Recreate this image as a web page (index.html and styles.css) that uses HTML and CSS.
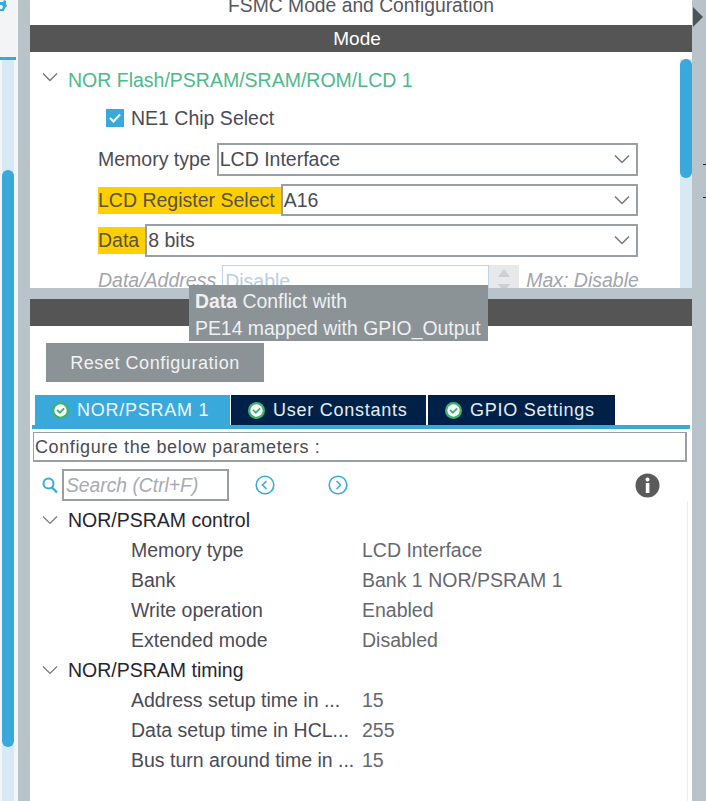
FILE: index.html
```html
<!DOCTYPE html>
<html lang="en">
<head>
<meta charset="utf-8">
<title>FSMC Mode and Configuration</title>
<link rel="stylesheet" href="styles.css">
</head>
<body>
<div class="app">
  <aside class="left">
    <svg class="gear" width="8" height="14" viewBox="0 0 8 14"><path d="M0 2h3l1-2 2 1v3l1 2-2 2-1 3H0V9h2l1-2-1-2H0z" fill="#39a9dc"/></svg>
    <div class="left-line"></div>
    <div class="left-track"><div class="left-thumb"></div></div>
  </aside>
  <div class="strip">
  </div>
  <main class="center">
    <section class="top">
      <div class="title">FSMC Mode and Configuration</div>
      <div class="bar bar-mode">Mode</div>
      <div class="mode-body">
        <div class="mode-content">
          <div class="group-row">
            <svg class="chev chev-up" width="16" height="10" viewBox="0 0 16 10"><path d="M1 1.5l7 7 7-7" fill="none" stroke="#777" stroke-width="1.4"/></svg>
            <span class="green">NOR Flash/PSRAM/SRAM/ROM/LCD 1</span>
          </div>
          <label class="check-row">
            <span class="check"><svg width="18" height="18" viewBox="0 0 18 18"><path d="M4 9l3.5 3.5L14 5.5" fill="none" stroke="#fff" stroke-width="2"/></svg></span>
            NE1 Chip Select
          </label>
          <div class="field">
            <span class="lab">Memory type</span>
            <div class="select">LCD Interface<svg class="sel-chev" width="18" height="10" viewBox="0 0 18 10"><path d="M2 1.5l7 7 7-7" fill="none" stroke="#777" stroke-width="1.5"/></svg></div>
          </div>
          <div class="field">
            <span class="lab warn">LCD Register Select</span>
            <div class="select">A16<svg class="sel-chev" width="18" height="10" viewBox="0 0 18 10"><path d="M2 1.5l7 7 7-7" fill="none" stroke="#777" stroke-width="1.5"/></svg></div>
          </div>
          <div class="field">
            <span class="lab warn">Data</span>
            <div class="select">8 bits<svg class="sel-chev" width="18" height="10" viewBox="0 0 18 10"><path d="M2 1.5l7 7 7-7" fill="none" stroke="#777" stroke-width="1.5"/></svg></div>
          </div>
          <div class="field disabled">
            <span class="lab">Data/Address</span>
            <div class="spin-input">Disable</div>
            <div class="spin"><svg width="30" height="30" viewBox="0 0 30 30"><path d="M15 4l6 8H9zM15 27l-6-8h12z" fill="#ccd0d3"/></svg></div>
            <span class="max">Max: Disable</span>
          </div>
        </div>
        <div class="v-track"><div class="v-thumb"></div></div>
      </div>
    </section>
    <div class="splitter"></div>
    <section class="bottom">
      <div class="bar bar-blank"></div>
      <button class="reset">Reset Configuration</button>
      <div class="tabs">
        <div class="tab active"><svg class="ok" width="17" height="17" viewBox="0 0 16 16"><circle cx="8" cy="8" r="8" fill="#3cb371"/><circle cx="8" cy="8" r="5.8" fill="#fff"/><path d="M4.8 7.4l2.6 2.6 4-4" fill="none" stroke="#3cb371" stroke-width="1.8"/></svg>NOR/PSRAM 1</div>
        <div class="tab"><svg class="ok" width="17" height="17" viewBox="0 0 16 16"><circle cx="8" cy="8" r="8" fill="#3cb371"/><circle cx="8" cy="8" r="5.8" fill="#fff"/><path d="M4.8 7.4l2.6 2.6 4-4" fill="none" stroke="#3cb371" stroke-width="1.8"/></svg>User Constants</div>
        <div class="tab tab-last"><svg class="ok" width="17" height="17" viewBox="0 0 16 16"><circle cx="8" cy="8" r="8" fill="#3cb371"/><circle cx="8" cy="8" r="5.8" fill="#fff"/><path d="M4.8 7.4l2.6 2.6 4-4" fill="none" stroke="#3cb371" stroke-width="1.8"/></svg>GPIO Settings</div>
      </div>
      <div class="tab-line"></div>
      <div class="config-box">Configure the below parameters :</div>
      <div class="search-row">
        <svg class="mag" width="18" height="18" viewBox="0 0 17 18"><circle cx="7" cy="7.5" r="5" fill="none" stroke="#39a9dc" stroke-width="2"/><path d="M10.5 11.5l5 5" stroke="#39a9dc" stroke-width="2.4"/></svg>
        <div class="search">Search (Ctrl+F)</div>
        <svg class="nav nav-prev" width="20" height="20" viewBox="0 0 20 20"><circle cx="10" cy="10" r="8.8" fill="none" stroke="#39a9dc" stroke-width="1.6"/><path d="M11.5 6l-4 4 4 4" fill="none" stroke="#39a9dc" stroke-width="1.6"/></svg>
        <svg class="nav nav-next" width="20" height="20" viewBox="0 0 20 20"><circle cx="10" cy="10" r="8.8" fill="none" stroke="#39a9dc" stroke-width="1.6"/><path d="M8.5 6l4 4-4 4" fill="none" stroke="#39a9dc" stroke-width="1.6"/></svg>
        <svg class="info" width="25" height="25" viewBox="0 0 25 25"><circle cx="12.5" cy="12.5" r="12" fill="#5a5a5a"/><circle cx="12.5" cy="6.5" r="2" fill="#fff"/><rect x="10.8" y="10" width="3.6" height="10" fill="#fff"/></svg>
      </div>
      <div class="tree">
        <div class="tree-head"><svg class="chev" width="16" height="10" viewBox="0 0 16 10"><path d="M1 1.5l7 7 7-7" fill="none" stroke="#777" stroke-width="1.2"/></svg>NOR/PSRAM control</div>
        <div class="tree-row"><span>Memory type</span><span class="val">LCD Interface</span></div>
        <div class="tree-row"><span>Bank</span><span class="val">Bank 1 NOR/PSRAM 1</span></div>
        <div class="tree-row"><span>Write operation</span><span class="val">Enabled</span></div>
        <div class="tree-row"><span>Extended mode</span><span class="val">Disabled</span></div>
        <div class="tree-head"><svg class="chev" width="16" height="10" viewBox="0 0 16 10"><path d="M1 1.5l7 7 7-7" fill="none" stroke="#777" stroke-width="1.2"/></svg>NOR/PSRAM timing</div>
        <div class="tree-row"><span>Address setup time in ...</span><span class="val">15</span></div>
        <div class="tree-row"><span>Data setup time in HCL...</span><span class="val">255</span></div>
        <div class="tree-row"><span>Bus turn around time in ...</span><span class="val">15</span></div>
      </div>
    </section>
    <div class="tooltip"><b>Data</b> Conflict with<br>PE14 mapped with GPIO_Output</div>
  </main>
  <aside class="right">
    <svg class="tri" width="11" height="20" viewBox="0 0 11 20"><path d="M0 0l10 10L0 20z" fill="#4f5356"/></svg>
    <div class="tick tick-a"></div>
    <div class="tick tick-b"></div>
  </aside>
</div>
</body>
</html>
```
FILE: styles.css
```css
* { box-sizing: border-box; }
html, body { margin: 0; padding: 0; }
body { width: 706px; height: 801px; overflow: hidden; background: #fff; font-family: "Liberation Sans", Arial, sans-serif; color: #4b4b55; }
.app { display: flex; width: 706px; height: 801px; }

.left { width: 18px; flex: none; display: flex; flex-direction: column; background: #f3f4f5; position: relative; }
.gear { position: absolute; left: 0; top: 0; }
.left-line { height: 3px; margin-top: 57px; width: 16px; background: #39a9dc; flex: none; }
.left-track { flex: 1; width: 12px; margin-left: 2px; background: #d8e8f5; padding-top: 110px; }
.left-thumb { height: 577px; background: #39a9dc; border-radius: 6px; }
.strip { width: 12px; flex: none; background: #b9c4ca; }

.center { width: 662px; flex: none; display: flex; flex-direction: column; position: relative; background: #fff; }
.top { height: 288px; flex: none; display: flex; flex-direction: column; overflow: hidden; }
.title { height: 29px; flex: none; margin-top: -4px; text-align: center; font-size: 19.3px; line-height: 20px; color: #56565e; }
.bar { height: 27px; flex: none; background: #545554; color: #fff; text-align: center; font-size: 19px; line-height: 27px; }
.bar-mode { padding-right: 8px; }
.mode-body { flex: 1; display: flex; min-height: 0; }
.mode-content { flex: 1; padding: 16px 0 0 12px; min-width: 0; }
.group-row { display: flex; align-items: center; height: 24px; font-size: 19.5px; gap: 10px; }
.green { color: #4eb98c; }
.chev { flex: none; }
.chev-up { margin-top: -6px; }
.check-row { display: flex; align-items: center; gap: 7px; height: 28px; margin: 12px 0 0 64px; font-size: 19.5px; }
.check { width: 18px; height: 18px; background: #39a9dc; flex: none; display: block; }
.check svg { display: block; }
.field { display: flex; align-items: stretch; height: 32.5px; margin: 0 0 8px 56px; font-size: 19.5px; }
.check-row + .field { margin-top: 11px; }
.lab { line-height: 27px; height: 27px; margin-top: 3px; padding-right: 6px; white-space: nowrap; }
.warn { background: #ffcf00; color: #575349; }
.select { flex: 1; margin-right: 42px; border: 2px solid #9a9fa5; padding: 0 5px 0 1px; line-height: 28px; background: #fff; display: flex; justify-content: space-between; align-items: center; }
.field.disabled { height: 30px; margin-bottom: 0; color: #a2a5ac; }
.field.disabled .lab { font-style: italic; margin-top: 0; padding-right: 6px; line-height: 31px; }
.spin-input { width: 267px; height: 30px; flex: none; border: 1px solid #bed6ec; border-bottom: 0; padding-left: 2px; line-height: 31px; color: #b9cfe3; }
.spin { width: 30px; height: 30px; background: #e6e8ea; flex: none; }
.spin svg { display: block; }
.max { font-style: italic; margin-left: 7px; line-height: 31px; white-space: nowrap; }
.v-track { width: 12px; flex: none; background: #d8e8f5; margin-top: 7px; }
.v-thumb { height: 119px; background: #39a9dc; border-radius: 6px; }

.splitter { height: 11px; flex: none; background: #b9c4ca; }
.bottom { flex: 1; display: flex; flex-direction: column; min-height: 0; }
.bar-blank { height: 27px; }
.reset { width: 218px; height: 39px; margin: 17px 0 0 16px; border: 0; background: #8c9397; color: #f2f2f2; font: 18px "Liberation Sans", Arial, sans-serif; letter-spacing: .55px; flex: none; padding: 2px 0 0; }
.tabs { display: flex; margin: 13px 0 0 5px; height: 30px; flex: none; gap: 1px; }
.tab { width: 195px; background: #002147; color: #e8edf2; display: flex; align-items: center; gap: 8px; padding-left: 17px; font-size: 18px; letter-spacing: .75px; white-space: nowrap; }
.tab.active { background: #39a9dc; color: #eef8fd; }
.tab-last { width: 187px; margin-left: 1px; }
.tab .ok { flex: none; }
.tab-line { height: 4px; flex: none; margin: 0 2px; background: #39a9dc; }
.config-box { height: 30px; flex: none; margin: 3px 5px 0 3px; border: 1px solid #9a9fa5; border-width: 1px 2px 2px 1px; padding-left: 1px; font-size: 18px; letter-spacing: .6px; line-height: 28px; }
.search-row { display: flex; align-items: center; height: 32px; flex: none; margin-top: 7px; padding-left: 12px; }
.mag { flex: none; margin-left: -1px; }
.search { width: 167px; height: 32px; margin-left: 3px; border: 2px solid #9a9fa5; font-style: italic; color: #a8abb0; font-size: 19.3px; line-height: 29px; padding-left: 2px; }
.nav { flex: none; }
.nav-prev { margin-left: 26px; }
.nav-next { margin-left: 53px; }
.info { margin-left: 287px; flex: none; }
.tree { padding: 4px 0 0 12px; flex: 1; border-right: 1px solid #eee; margin-right: 4px; }
.tree-head { height: 30px; display: flex; align-items: center; gap: 10px; color: #26262e; font-size: 19.5px; }
.tree-row { height: 30px; display: grid; grid-template-columns: 231px 1fr; align-items: center; padding-left: 89px; font-size: 19.5px; white-space: nowrap; }
.val { color: #666870; }

.tooltip { position: absolute; left: 159px; top: 285px; width: 299px; height: 56px; background: #8c9397; color: #eef0f1; font-size: 19.4px; line-height: 27px; padding: 3px 0 0 6px; white-space: nowrap; z-index: 2; }
.tooltip b { font-weight: 700; }

.right { flex: 1; background: #b9c4ca; position: relative; }
.tri { position: absolute; left: 1px; top: 7px; }
.tick { position: absolute; left: 11px; width: 3px; height: 1px; background: #222; }
.tick-a { top: 164px; }
.tick-b { top: 197px; }
```
